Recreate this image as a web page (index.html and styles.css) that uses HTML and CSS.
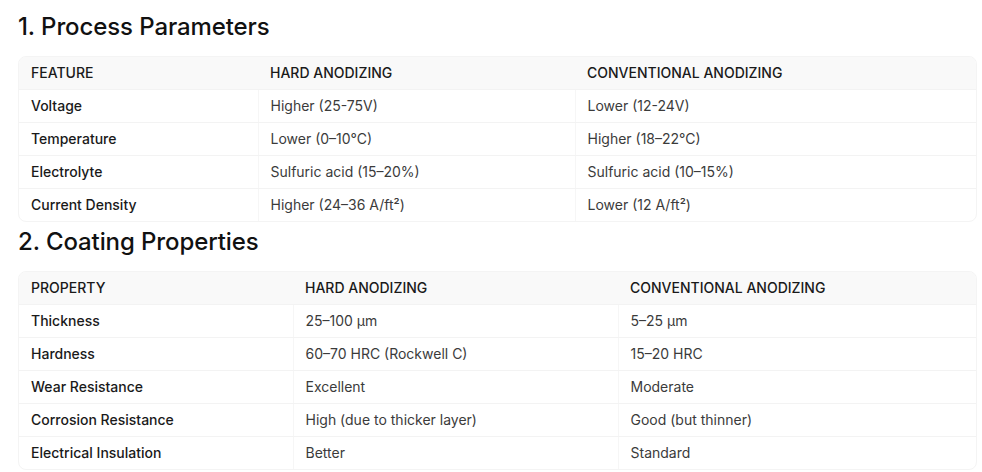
FILE: index.html
```html
<!DOCTYPE html>
<html lang="en">
<head>
<meta charset="utf-8">
<title>Hard vs Conventional Anodizing</title>
<link rel="stylesheet" href="styles.css">
</head>
<body>
<h2 class="section-title first">1. Process Parameters</h2>
<div class="table-wrap">
<table class="cmp t1">
<colgroup><col class="c1"><col class="c2"><col class="c3"></colgroup>
<thead><tr><th>Feature</th><th>Hard Anodizing</th><th>Conventional Anodizing</th></tr></thead>
<tbody>
<tr><td>Voltage</td><td>Higher (25-75V)</td><td>Lower (12-24V)</td></tr>
<tr><td>Temperature</td><td>Lower (0–10°C)</td><td>Higher (18–22°C)</td></tr>
<tr><td>Electrolyte</td><td>Sulfuric acid (15–20%)</td><td>Sulfuric acid (10–15%)</td></tr>
<tr><td>Current Density</td><td>Higher (24–36 A/ft²)</td><td>Lower (12 A/ft²)</td></tr>
</tbody>
</table>
</div>
<h2 class="section-title">2. Coating Properties</h2>
<div class="table-wrap">
<table class="cmp t2">
<colgroup><col class="c1"><col class="c2"><col class="c3"></colgroup>
<thead><tr><th>Property</th><th>Hard Anodizing</th><th>Conventional Anodizing</th></tr></thead>
<tbody>
<tr><td>Thickness</td><td>25–100 µm</td><td>5–25 µm</td></tr>
<tr><td>Hardness</td><td>60–70 HRC (Rockwell C)</td><td>15–20 HRC</td></tr>
<tr><td>Wear Resistance</td><td>Excellent</td><td>Moderate</td></tr>
<tr><td>Corrosion Resistance</td><td>High (due to thicker layer)</td><td>Good (but thinner)</td></tr>
<tr><td>Electrical Insulation</td><td>Better</td><td>Standard</td></tr>
</tbody>
</table>
</div>
</body>
</html>
```
FILE: styles.css
```css
html, body {
  margin: 0;
  padding: 0;
  background: #ffffff;
}
body {
  padding: 0 5px 0 18px;
  font-family: Inter, "Noto Sans", "Liberation Sans", sans-serif;
  color: #1f1f1f;
}
.section-title {
  margin: 4px 0 13px 0;
  font-size: 24px;
  line-height: 32px;
  font-weight: 500;
  letter-spacing: -0.1px;
  color: #111111;
}
.section-title.first {
  margin-top: 11px;
}
.table-wrap {
  border: 1px solid #f4f4f4;
  border-radius: 8px;
  overflow: hidden;
  width: 957px;
}
.cmp {
  width: 100%;
  border-collapse: collapse;
  table-layout: fixed;
  font-size: 14px;
}
.t1 .c1 { width: 239px; }
.t1 .c2 { width: 317px; }
.t2 .c1 { width: 274px; }
.t2 .c2 { width: 325px; }
.cmp th, .cmp td {
  padding: 8px 12px;
  line-height: 16px;
  text-align: left;
  border-bottom: 1px solid #f3f3f3;
  border-right: 1px solid #f6f6f6;
}
.cmp th:last-child, .cmp td:last-child {
  border-right: none;
}
.cmp tbody tr:last-child td {
  border-bottom: none;
}
.cmp th {
  background: #f9f9f9;
  font-weight: 500;
  text-transform: uppercase;
  color: #1a1a1a;
  border-right: none;
}
.cmp td {
  font-weight: 400;
  color: #3b3b3b;
}
.cmp td:first-child {
  font-weight: 500;
  color: #1a1a1a;
}
```
